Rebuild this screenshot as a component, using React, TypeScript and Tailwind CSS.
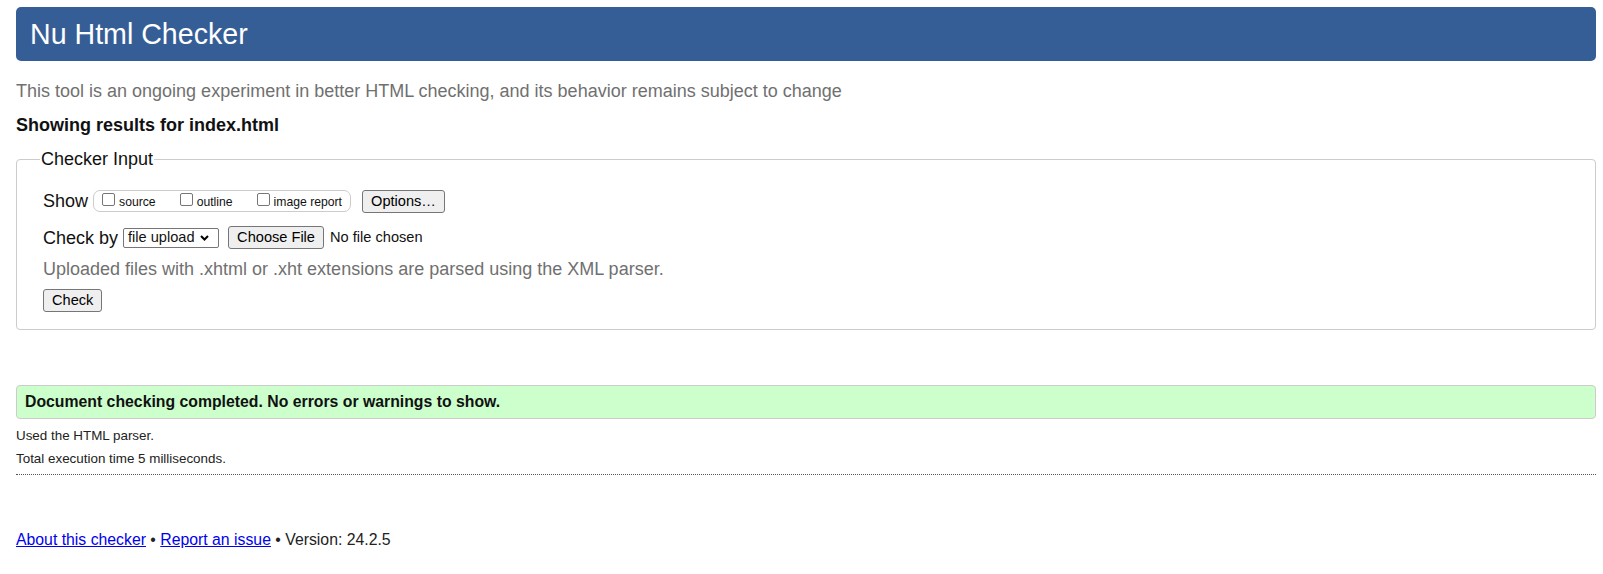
import React from "react";

function Box({ label }: { label: string }) {
  return (
    <span className="flex items-center mr-[24px] last:mr-0">
      <span className="w-[13px] h-[13px] border border-[#767676] rounded-[2px] bg-white mb-[4px]" />
      <span className="ml-[4px] text-[12.2px] leading-[14px] mt-[2px]">{label}</span>
    </span>
  );
}

function Btn({ children, className = "" }: { children: React.ReactNode; className?: string }) {
  return (
    <button
      className={
        "h-[23px] px-[8px] bg-[#efefef] border border-[#767676] rounded-[3px] text-[14.6px] leading-none text-black " +
        className
      }
    >
      {children}
    </button>
  );
}

export default function App() {
  return (
    <div className="min-h-[574px] bg-white pt-[7px] pl-4 pr-[7px] text-[18px] text-[#111] font-['Liberation_Sans',Arial,sans-serif]">
      <div className="h-[54px] bg-[#365e96] rounded-[5px] flex items-center pl-[14px]">
        <h1 className="text-[28.6px] text-white font-normal leading-none">Nu Html Checker</h1>
      </div>

      <p className="mt-[20px] leading-[21px] text-[#707070]">
        This tool is an ongoing experiment in better HTML checking, and its behavior remains subject to change
      </p>
      <p className="mt-[13px] leading-[21px] font-bold">Showing results for index.html</p>

      <fieldset className="mt-[13px] border border-[#cccccc] rounded-[4px] pl-[26px] pt-[20px] pb-[16px]">
        <legend className="ml-[-3px] px-[1px] leading-[21px]">Checker Input</legend>

        <div className="flex items-center h-[22px]">
          <span className="leading-none">Show</span>
          <div className="ml-[5px] h-[22px] w-[258px] flex items-center pl-[8px] border border-[#cccccc] rounded-[7px]">
            <Box label="source" />
            <Box label="outline" />
            <Box label="image report" />
          </div>
          <Btn className="ml-[11px] h-[22px] w-[83px]">Options…</Btn>
        </div>

        <div className="mt-[14px] flex items-center h-[23px]">
          <span className="leading-none">Check by</span>
          <div className="ml-[5px] h-[20px] w-[96px] border border-[#767676] rounded-[2px] bg-white flex items-center pl-[4px] pr-[9px] justify-between">
            <span className="text-[14.6px] leading-none">file upload</span>
            <svg width="9" height="6" viewBox="0 0 9 6" className="mt-[1px]">
              <path d="M1 1 L4.5 4.5 L8 1" fill="none" stroke="#000" strokeWidth="2" />
            </svg>
          </div>
          <Btn className="ml-[9px] w-[96px]">Choose File</Btn>
          <span className="ml-[6px] text-[14.6px] leading-none">No file chosen</span>
        </div>

        <p className="mt-[10px] leading-[21px] text-[#707070]">
          Uploaded files with .xhtml or .xht extensions are parsed using the XML parser.
        </p>

        <Btn className="mt-[9px] w-[59px]">Check</Btn>
      </fieldset>

      <div className="mt-[55px] h-[34px] bg-[#ccffcc] border border-[#cccccc] rounded-[4px] flex items-center pl-[8px]">
        <p className="text-[15.8px] font-bold leading-none">Document checking completed. No errors or warnings to show.</p>
      </div>

      <div className="border-b border-dotted border-[#555] text-[13.4px] text-[#222] pb-[7px]">
        <p className="mt-[9px] leading-[16px]">Used the HTML parser.</p>
        <p className="mt-[7px] leading-[16px]">Total execution time 5 milliseconds.</p>
      </div>

      <p className="mt-[55px] text-[15.8px] leading-[19px] text-[#222]">
        <a href="#" className="text-[#0000ee] underline">About this checker</a>
        {" • "}
        <a href="#" className="text-[#0000ee] underline">Report an issue</a>
        {" • Version: 24.2.5"}
      </p>
    </div>
  );
}
